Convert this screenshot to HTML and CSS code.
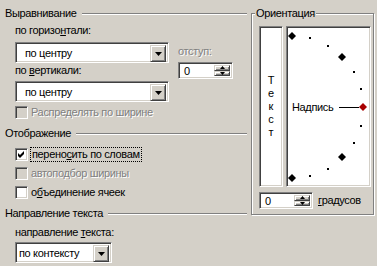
FILE: index.html
```html
<!DOCTYPE html>
<html lang="ru">
<head>
<meta charset="utf-8">
<title>Выравнивание</title>
<link rel="stylesheet" href="styles.css">
</head>
<body>
<div class="dlg">
  <div class="left">
    <div class="hdr hdr-1"><span>Выравнивание</span><i class="etch"></i></div>
    <div class="align-row ind">
      <div class="align-col">
        <div class="lbl lbl-h">по горизо<u>н</u>тали:</div>
        <div class="combo combo-1">
          <span class="combo-text pad-wide">по центру</span>
          <span class="dd"><svg width="7" height="4" viewBox="0 0 7 4"><polygon points="0,0 7,0 3.5,4" fill="#000"/></svg></span>
        </div>
        <div class="lbl lbl-v">по <u>в</u>ертикали:</div>
        <div class="combo combo-2">
          <span class="combo-text pad-wide">по центру</span>
          <span class="dd"><svg width="7" height="4" viewBox="0 0 7 4"><polygon points="0,0 7,0 3.5,4" fill="#000"/></svg></span>
        </div>
      </div>
      <div class="indent-col">
        <div class="lbl dis lbl-ind">отступ:</div>
        <div class="spin spin-ind">
          <span class="spin-text">0</span>
          <span class="spin-btns">
            <span class="sb"><svg width="5" height="3" viewBox="0 0 5 3"><polygon points="2.5,0 5,3 0,3" fill="#000"/></svg></span>
            <span class="sb"><svg width="5" height="3" viewBox="0 0 5 3"><polygon points="0,0 5,0 2.5,3" fill="#000"/></svg></span>
          </span>
        </div>
      </div>
    </div>
    <div class="chk-row ind row-dist">
      <span class="box box-dis"></span>
      <span class="dis">Распределять по ширине</span>
    </div>

    <div class="hdr hdr-2"><span>Отображение</span><i class="etch"></i></div>
    <div class="chk-row ind row-wrap">
      <span class="box"><svg width="9" height="9" viewBox="0 0 9 9"><polygon points="1,3 3,5 7,1 7,4 3,8 1,6" fill="#000"/></svg></span>
      <span class="focus">перено<u>с</u>ить по словам</span>
    </div>
    <div class="chk-row ind row-fit">
      <span class="box box-dis"></span>
      <span class="dis">автоподбор ширины</span>
    </div>
    <div class="chk-row ind row-merge">
      <span class="box"></span>
      <span>о<u>б</u>ъединение ячеек</span>
    </div>

    <div class="hdr hdr-3"><span>Направление текста</span><i class="etch"></i></div>
    <div class="lbl ind lbl-dir">направление <u>т</u>екста:</div>
    <div class="combo combo-3 ind">
      <span class="combo-text pad-narrow">по контексту</span>
      <span class="dd"><svg width="7" height="4" viewBox="0 0 7 4"><polygon points="0,0 7,0 3.5,4" fill="#000"/></svg></span>
    </div>
  </div>

  <div class="orient">
    <span class="orient-title">Ориентация</span>
    <div class="orient-top">
      <div class="vtext">
        <span>Т</span><span>е</span><span>к</span><span>с</span><span>т</span>
      </div>
      <div class="dial">
        <svg class="dial-svg" width="81" height="157" viewBox="288 28 81 157">
          <g fill="#000">
            <polygon points="292,32 296,36 292,40 288,36"/>
            <polygon points="342,53 346,57 342,61 338,57"/>
            <polygon points="342,153 346,157 342,161 338,157"/>
            <polygon points="292,174 296,178 292,182 288,178"/>
            <rect x="309" y="37" width="2" height="2"/>
            <rect x="327" y="45" width="2" height="2"/>
            <rect x="353" y="71" width="2" height="2"/>
            <rect x="360" y="88" width="2" height="2"/>
            <rect x="360" y="125" width="2" height="2"/>
            <rect x="353" y="142" width="2" height="2"/>
            <rect x="327" y="168" width="2" height="2"/>
            <rect x="309" y="175" width="2" height="2"/>
            <rect x="339" y="107" width="20" height="1"/>
          </g>
          <polygon points="363,103 367,107 363,111 359,107" fill="#a80000"/>
          <text x="292" y="111" class="dial-text">Надпись</text>
        </svg>
      </div>
    </div>
    <div class="deg-row">
      <div class="spin spin-deg">
        <span class="spin-text">0</span>
        <span class="spin-btns">
          <span class="sb"><svg width="5" height="3" viewBox="0 0 5 3"><polygon points="2.5,0 5,3 0,3" fill="#000"/></svg></span>
          <span class="sb"><svg width="5" height="3" viewBox="0 0 5 3"><polygon points="0,0 5,0 2.5,3" fill="#000"/></svg></span>
        </span>
      </div>
      <span><u>г</u>радусов</span>
    </div>
  </div>
</div>
</body>
</html>
```

FILE: styles.css
```css
* { box-sizing: border-box; }
html, body { margin: 0; padding: 0; }
body {
  background: #d4d0c8;
  font-family: "Liberation Sans", Arial, sans-serif;
  font-size: 11px;
  line-height: 13px;
  letter-spacing: -0.35px;
  color: #000;
  width: 377px;
  height: 266px;
  overflow: hidden;
}
u { text-decoration: underline; text-underline-offset: 1px; }

.dlg { display: flex; align-items: flex-start; }

.left {
  width: 247px;
  padding-left: 5px;
  display: flex;
  flex-direction: column;
}
.ind { margin-left: 10px; }

.hdr { display: flex; align-items: center; height: 13px; gap: 5px; white-space: nowrap; }
.hdr .etch { flex: 1; height: 2px; border-top: 1px solid #808080; border-bottom: 1px solid #fff; }
.hdr-1 { margin-top: 7px; }
.hdr-2 { margin-top: 8px; }
.hdr-3 { margin-top: 8px; }

.lbl { height: 13px; white-space: nowrap; }
.dis { color: #808080; text-shadow: 1px 1px 0 #fff; }

.align-row { display: flex; gap: 9px; }
.align-col { width: 154px; display: flex; flex-direction: column; }
.lbl-h { margin-top: 4px; }
.combo-1 { margin-top: 5px; }
.lbl-v { margin-top: 1px; }
.combo-2 { margin-top: 4px; }
.indent-col { display: flex; flex-direction: column; }
.lbl-ind { margin-top: 25px; }
.spin-ind { margin-top: 4px; }

.combo, .spin, .box, .vtext, .dial {
  border: 1px solid;
  border-color: #808080 #fff #fff #808080;
  box-shadow: inset 1px 1px #404040, inset -1px -1px #d4d0c8;
  background: #fff;
}

.combo { display: flex; height: 21px; padding: 2px; }
.combo-1, .combo-2 { width: 154px; }
.combo-3 { width: 97px; margin-top: 3px; }
.combo-text { flex: 1; line-height: 17px; white-space: nowrap; overflow: hidden; }
.pad-wide { padding-left: 7px; }
.pad-narrow { padding-left: 1px; }

.dd, .sb {
  display: flex;
  align-items: center;
  justify-content: center;
  background: #d4d0c8;
  border: 1px solid;
  border-color: #d4d0c8 #404040 #404040 #d4d0c8;
  box-shadow: inset 1px 1px #fff, inset -1px -1px #808080;
}
.dd { width: 16px; height: 17px; }
.dd svg, .sb svg { display: block; }

.spin { display: flex; height: 17px; padding: 2px; }
.spin-ind { width: 55px; }
.spin-text { flex: 1; line-height: 13px; padding-left: 3px; }
.spin-btns { display: flex; flex-direction: column; width: 16px; }
.sb { flex: 1; }

.chk-row { display: flex; align-items: center; gap: 3px; height: 13px; white-space: nowrap; }
.row-dist { margin-top: 4px; }
.row-wrap { margin-top: 8px; }
.row-fit { margin-top: 6px; }
.row-merge { margin-top: 6px; }
.box { width: 13px; height: 13px; flex: none; padding: 1px; display: flex; align-items: center; justify-content: center; }
.box svg { display: block; }
.box-dis { background: #d4d0c8; }
.focus { border: 1px dotted #000; padding: 0 1px; margin-left: -1px; line-height: 13px; }

.lbl-dir { margin-top: 6px; }

.orient {
  position: relative;
  margin-left: 4px;
  margin-top: 13px;
  width: 123px;
  height: 202px;
  border: 1px solid #808080;
  box-shadow: inset 1px 1px #fff, 1px 1px #fff;
  padding: 12px 2px 5px 7px;
}
.orient-title {
  position: absolute;
  top: -7px;
  left: 3px;
  padding: 0 1px;
  background: #d4d0c8;
  line-height: 13px;
  white-space: nowrap;
}
.orient-top { display: flex; gap: 3px; height: 161px; }
.vtext {
  width: 24px;
  display: flex;
  flex-direction: column;
  align-items: center;
  justify-content: center;
  line-height: 13px;
  letter-spacing: 0;
}
.dial { width: 85px; padding: 1px; }
.dial-svg { display: block; }
.dial-text { font-family: "Liberation Sans", Arial, sans-serif; font-size: 11px; letter-spacing: -0.35px; }

.deg-row { display: flex; align-items: center; gap: 5px; margin-top: 5px; white-space: nowrap; }
.spin-deg { width: 54px; }
```
